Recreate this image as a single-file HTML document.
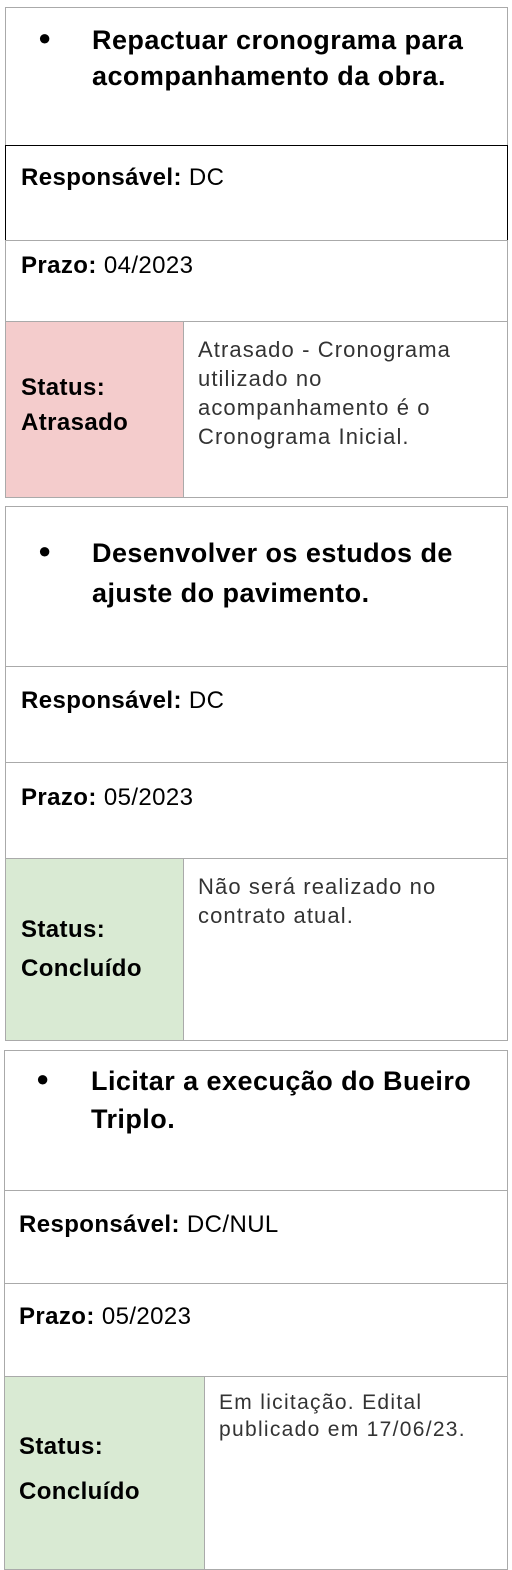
<!DOCTYPE html>
<html><head><meta charset="utf-8"><style>
body{margin:0;width:512px;height:1570px;background:#fff;position:relative;overflow:hidden;font-family:"Liberation Sans",Arial,sans-serif;color:#000}
.b{position:absolute;box-sizing:border-box;border:1.5px solid #aaa}
.t{position:absolute;white-space:nowrap;line-height:1}
.h{font-weight:bold;font-size:27px;letter-spacing:0.45px}
.l{font-size:24px;letter-spacing:0.4px}
.l b{font-weight:bold}
.r{font-size:22px;color:#333;line-height:29px;letter-spacing:1.1px}
</style></head><body>
<!-- card 1 -->
<div class="b" style="left:5px;top:7px;width:503px;height:139px"></div>
<div class="b" style="left:5px;top:145px;width:503px;height:96px;border-color:#000"></div>
<div class="b" style="left:5px;top:240px;width:503px;height:82px"></div>
<div class="b" style="left:5px;top:321px;width:179px;height:177px;background:#f4cccc"></div>
<div class="b" style="left:183px;top:321px;width:325px;height:177px"></div>
<div class="t h" style="left:38px;top:27px;font-size:22px">●</div>
<div class="t h" style="left:92px;top:27px">Repactuar cronograma para</div>
<div class="t h" style="left:92px;top:63px">acompanhamento da obra.</div>
<div class="t l" style="left:21px;top:166px"><b>Responsável:</b> DC</div>
<div class="t l" style="left:21px;top:254px"><b>Prazo:</b> 04/2023</div>
<div class="t l" style="left:21px;top:376px"><b>Status:</b></div>
<div class="t l" style="left:21px;top:411px"><b>Atrasado</b></div>
<div class="t r" style="left:198px;top:335px">Atrasado - Cronograma<br>utilizado no<br>acompanhamento é o<br>Cronograma Inicial.</div>
<!-- card 2 -->
<div class="b" style="left:5px;top:506px;width:503px;height:161px"></div>
<div class="b" style="left:5px;top:666px;width:503px;height:97px"></div>
<div class="b" style="left:5px;top:762px;width:503px;height:97px"></div>
<div class="b" style="left:5px;top:858px;width:179px;height:183px;background:#d9ead3"></div>
<div class="b" style="left:183px;top:858px;width:325px;height:183px"></div>
<div class="t h" style="left:38px;top:540px;font-size:22px">●</div>
<div class="t h" style="left:92px;top:540px">Desenvolver os estudos de</div>
<div class="t h" style="left:92px;top:580px">ajuste do pavimento.</div>
<div class="t l" style="left:21px;top:689px"><b>Responsável:</b> DC</div>
<div class="t l" style="left:21px;top:786px"><b>Prazo:</b> 05/2023</div>
<div class="t l" style="left:21px;top:918px"><b>Status:</b></div>
<div class="t l" style="left:21px;top:957px"><b>Concluído</b></div>
<div class="t r" style="left:198px;top:872px">Não será realizado no<br>contrato atual.</div>
<!-- card 3 -->
<div class="b" style="left:4px;top:1050px;width:504px;height:141px"></div>
<div class="b" style="left:4px;top:1190px;width:504px;height:94px"></div>
<div class="b" style="left:4px;top:1283px;width:504px;height:94px"></div>
<div class="b" style="left:4px;top:1376px;width:201px;height:194px;background:#d9ead3"></div>
<div class="b" style="left:204px;top:1376px;width:304px;height:194px"></div>
<div class="t h" style="left:36px;top:1068px;font-size:22px">●</div>
<div class="t h" style="left:91px;top:1068px">Licitar a execução do Bueiro</div>
<div class="t h" style="left:91px;top:1106px">Triplo.</div>
<div class="t l" style="left:19px;top:1213px"><b>Responsável:</b> DC/NUL</div>
<div class="t l" style="left:19px;top:1305px"><b>Prazo:</b> 05/2023</div>
<div class="t l" style="left:19px;top:1435px"><b>Status:</b></div>
<div class="t l" style="left:19px;top:1480px"><b>Concluído</b></div>
<div class="t r" style="left:219px;top:1389px;font-size:21px;line-height:27px;letter-spacing:1.3px">Em licitação. Edital<br>publicado em 17/06/23.</div>
</body></html>
